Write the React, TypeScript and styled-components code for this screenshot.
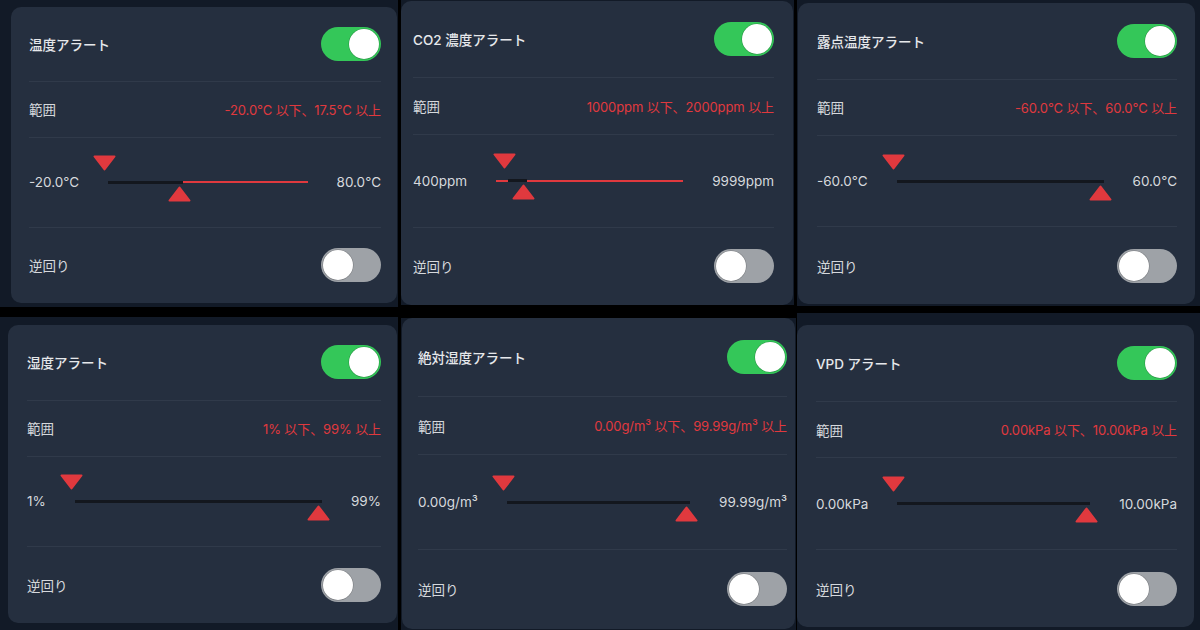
import React from "react";
import styled, { createGlobalStyle } from "styled-components";

// alert settings – six cards, collage of device screenshots

const GlobalStyle = createGlobalStyle`
  html, body {
    margin: 0;
    padding: 0;
    background: #000;
  }
  body {
    font-family: "Inter", "Noto Sans CJK JP", sans-serif;
    -webkit-font-smoothing: antialiased;
  }
`;

const Page = styled.div`
  width: 1200px;
  height: 630px;
  overflow: hidden;
  background: #000;
  display: flex;
  flex-direction: column;
`;

const Row = styled.div<{ $h: number }>`
  display: flex;
  align-items: flex-start;
  height: ${(p) => p.$h}px;
`;

const Tile = styled.div<{
  $w: number;
  $h: number;
  $ml: number;
  $mt: number;
  $pad: string;
}>`
  box-sizing: border-box;
  display: flex;
  width: ${(p) => p.$w}px;
  height: ${(p) => p.$h}px;
  margin-left: ${(p) => p.$ml}px;
  margin-top: ${(p) => p.$mt}px;
  padding: ${(p) => p.$pad};
  background: #121a27;
  overflow: hidden;
`;

const Card = styled.div<{ $h: number; $pl: number; $pr: number }>`
  box-sizing: border-box;
  flex: 1;
  height: ${(p) => p.$h}px;
  background: #252f3f;
  border-radius: 10px;
  padding: 0 ${(p) => p.$pr}px 0 ${(p) => p.$pl}px;
  display: flex;
  flex-direction: column;
`;

const Section = styled.div<{ $grow: number; $line?: boolean }>`
  flex: ${(p) => p.$grow} 1 0;
  display: flex;
  align-items: center;
  justify-content: space-between;
  border-top: ${(p) => (p.$line ? "1px solid #303a4a" : "none")};
`;

const Title = styled.span`
  font-size: 13.5px;
  font-weight: 500;
  color: #e6e8eb;
`;

const Label = styled.span`
  font-size: 13.5px;
  font-weight: 400;
  color: #d6d9dd;
`;

const RangeText = styled.span`
  font-size: 13px;
  color: #e0393e;
  letter-spacing: -0.1px;
`;

const Bound = styled.span`
  font-size: 13.5px;
  color: #d6d9dd;
  white-space: nowrap;
`;

const SwitchBox = styled.div<{ $on: boolean }>`
  position: relative;
  flex: none;
  width: 60px;
  height: 34px;
  border-radius: 17px;
  background: ${(p) => (p.$on ? "#34c759" : "#9ea2a7")};
`;

const Knob = styled.div<{ $on: boolean }>`
  position: absolute;
  top: 2px;
  left: ${(p) => (p.$on ? "28px" : "2px")};
  width: 30px;
  height: 30px;
  border-radius: 50%;
  background: #fff;
  box-shadow: 0 0 0 0.5px rgba(0, 0, 0, 0.25);
`;

const TrackWrap = styled.div`
  position: relative;
  flex: 1;
  height: 3px;
  margin: 0 29px;
`;

const Track = styled.div`
  display: flex;
  height: 3px;
  width: 100%;
`;

const Seg = styled.div<{ $red?: boolean }>`
  height: ${(p) => (p.$red ? "2px" : "3px")};
  margin-top: ${(p) => (p.$red ? "0.5px" : "0")};
  background: ${(p) => (p.$red ? "#e0393e" : "#13171e")};
`;

const Marker = styled.svg<{ $up?: boolean }>`
  position: absolute;
  width: 23px;
  height: 16px;
  top: ${(p) => (p.$up ? "5px" : "-26px")};
`;

function Switch({ on }: { on: boolean }) {
  return (
    <SwitchBox $on={on}>
      <Knob $on={on} />
    </SwitchBox>
  );
}

function Slider({ lo, hi }: { lo: number; hi: number }) {
  return (
    <TrackWrap>
      <Track>
        <Seg $red style={{ width: `${lo}%` }} />
        <Seg style={{ width: `${hi - lo}%` }} />
        <Seg $red style={{ flex: 1 }} />
      </Track>
      <Marker viewBox="0 0 23 16" style={{ left: `calc(${lo}% - 15px)` }}>
        <polygon
          points="1.5,1.5 21.5,1.5 11.5,14.5"
          fill="#e0393e"
          stroke="#e0393e"
          strokeWidth="2"
          strokeLinejoin="round"
        />
      </Marker>
      <Marker $up viewBox="0 0 23 16" style={{ left: `calc(${hi}% - 15px)` }}>
        <polygon
          points="11.5,1.5 21.5,14.5 1.5,14.5"
          fill="#e0393e"
          stroke="#e0393e"
          strokeWidth="2"
          strokeLinejoin="round"
        />
      </Marker>
    </TrackWrap>
  );
}

type Alert = {
  title: string;
  range: string;
  min: string;
  max: string;
  lo: number;
  hi: number;
  tile: { w: number; h: number; ml: number; mt: number; pad: string };
  card: { h: number; pl: number; pr: number };
};

const topRow: Alert[] = [
  {
    title: "温度アラート",
    range: "-20.0°C 以下、17.5°C 以上",
    min: "-20.0°C",
    max: "80.0°C",
    lo: 0,
    hi: 37.5,
    tile: { w: 398, h: 307, ml: 0, mt: 0, pad: "7px 1px 0 11px" },
    card: { h: 296, pl: 18, pr: 16 },
  },
  {
    title: "CO2 濃度アラート",
    range: "1000ppm 以下、2000ppm 以上",
    min: "400ppm",
    max: "9999ppm",
    lo: 6.25,
    hi: 16.7,
    tile: { w: 393, h: 305, ml: 3, mt: 0, pad: "1px 1px 0 0" },
    card: { h: 304, pl: 12, pr: 19 },
  },
  {
    title: "露点温度アラート",
    range: "-60.0°C 以下、60.0°C 以上",
    min: "-60.0°C",
    max: "60.0°C",
    lo: 0,
    hi: 100,
    tile: { w: 403, h: 306, ml: 3, mt: 0, pad: "3px 5px 0 1px" },
    card: { h: 301, pl: 19, pr: 18 },
  },
];

const bottomRow: Alert[] = [
  {
    title: "湿度アラート",
    range: "1% 以下、99% 以上",
    min: "1%",
    max: "99%",
    lo: 0,
    hi: 100,
    tile: { w: 398, h: 313, ml: 0, mt: 4, pad: "8px 1px 0 8px" },
    card: { h: 298, pl: 19, pr: 16 },
  },
  {
    title: "絶対湿度アラート",
    range: "0.00g/m³ 以下、99.99g/m³ 以上",
    min: "0.00g/m³",
    max: "99.99g/m³",
    lo: 0,
    hi: 100,
    tile: { w: 395, h: 312, ml: 3, mt: 5, pad: "0 1px 0 1px" },
    card: { h: 311, pl: 16, pr: 8 },
  },
  {
    title: "VPD アラート",
    range: "0.00kPa 以下、10.00kPa 以上",
    min: "0.00kPa",
    max: "10.00kPa",
    lo: 0,
    hi: 100,
    tile: { w: 403, h: 317, ml: 1, mt: 0, pad: "12px 6px 0 0" },
    card: { h: 302, pl: 19, pr: 17 },
  },
];

function AlertCard({ a }: { a: Alert }) {
  return (
    <Tile
      $w={a.tile.w}
      $h={a.tile.h}
      $ml={a.tile.ml}
      $mt={a.tile.mt}
      $pad={a.tile.pad}
    >
      <Card $h={a.card.h} $pl={a.card.pl} $pr={a.card.pr}>
        <Section $grow={75}>
          <Title>{a.title}</Title>
          <Switch on />
        </Section>
        <Section $grow={55} $line>
          <Label>範囲</Label>
          <RangeText>{a.range}</RangeText>
        </Section>
        <Section $grow={90} $line>
          <Bound>{a.min}</Bound>
          <Slider lo={a.lo} hi={a.hi} />
          <Bound>{a.max}</Bound>
        </Section>
        <Section $grow={76} $line>
          <Label>逆回り</Label>
          <Switch on={false} />
        </Section>
      </Card>
    </Tile>
  );
}

export default function App() {
  return (
    <>
      <GlobalStyle />
      <Page>
        <Row $h={313}>
          {topRow.map((a) => (
            <AlertCard key={a.title} a={a} />
          ))}
        </Row>
        <Row $h={317}>
          {bottomRow.map((a) => (
            <AlertCard key={a.title} a={a} />
          ))}
        </Row>
      </Page>
    </>
  );
}
